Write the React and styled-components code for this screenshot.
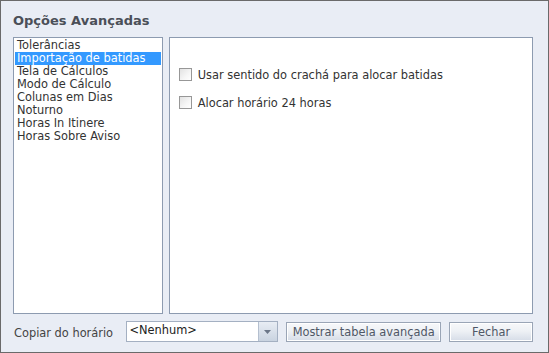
import React from "react";
import styled, { createGlobalStyle } from "styled-components";

const GlobalStyle = createGlobalStyle`
  html, body {
    margin: 0;
    padding: 0;
    background: #ffffff;
  }
`;

const Dialog = styled.div`
  box-sizing: border-box;
  width: 549px;
  height: 353px;
  border: 1px solid #6a6a6a;
  background: #e9edf5;
  padding: 0 15px 0 12px;
  display: flex;
  flex-direction: column;
  font-family: "DejaVu Sans", Verdana, sans-serif;
  font-size: 11.4px;
  color: #333;
`;

const Title = styled.div`
  height: 36px;
  box-sizing: border-box;
  padding-top: 12px;
  font-size: 13px;
  font-weight: bold;
  color: #4b4f58;
  line-height: 16px;
`;

const Panels = styled.div`
  display: flex;
  gap: 6px;
  height: 277px;
`;

const Box = styled.div`
  box-sizing: border-box;
  background: #ffffff;
  border: 1px solid #8d9bb0;
  width: ${(p) => p.$width}px;
  height: 100%;
`;

const List = styled(Box)`
  padding: 1px 1px;
`;

const Item = styled.div`
  height: 13px;
  line-height: 13px;
  padding-left: 2px;
  white-space: nowrap;
  color: ${(p) => (p.$selected ? "#ffffff" : "#333333")};
  background: ${(p) => (p.$selected ? "#3399ff" : "transparent")};
`;

const Options = styled(Box)`
  padding: 30px 0 0 9px;
  display: flex;
  flex-direction: column;
  gap: 15px;
`;

const CheckRow = styled.label`
  display: flex;
  align-items: center;
  gap: 6px;
  height: 13px;
  color: #333;
`;

const CheckBox = styled.span`
  box-sizing: border-box;
  width: 13px;
  height: 13px;
  border: 1px solid #979797;
  background: linear-gradient(135deg, #e2e2e2 0%, #f6f6f6 60%, #ffffff 100%);
`;

const Footer = styled.div`
  display: flex;
  align-items: center;
  height: 23px;
  margin-top: 6px;
`;

const FooterLabel = styled.span`
  width: 112px;
  color: #444;
  padding-left: 1px;
  padding-top: 2px;
`;

const Combo = styled.div`
  box-sizing: border-box;
  display: flex;
  width: 153px;
  height: 21px;
  border: 1px solid #a4b0c2;
  background: #ffffff;
  margin-right: 8px;
`;

const ComboText = styled.span`
  flex: 1;
  padding-left: 3px;
  line-height: 17px;
  color: #222;
`;

const ComboArrow = styled.span`
  width: 18px;
  border-left: 1px solid #b4bfcf;
  background: linear-gradient(#e8edf4, #c9d3e0);
  display: flex;
  align-items: center;
  justify-content: center;
`;

const Button = styled.button`
  box-sizing: border-box;
  width: ${(p) => p.$width}px;
  height: 20px;
  margin-right: ${(p) => p.$gap || 0}px;
  padding: 0;
  border: 1px solid #9aa5b6;
  box-shadow: inset 0 0 0 1px #ffffff;
  background: linear-gradient(#f7f8fa 0%, #eef1f5 45%, #d5dce7 100%);
  font-family: "DejaVu Sans", Verdana, sans-serif;
  font-size: 11.4px;
  color: #4f5766;
  line-height: 16px;
`;

const items = [
  "Tolerâncias",
  "Importação de batidas",
  "Tela de Cálculos",
  "Modo de Cálculo",
  "Colunas em Dias",
  "Noturno",
  "Horas In Itinere",
  "Horas Sobre Aviso",
];

export default function App() {
  return (
    <>
      <GlobalStyle />
      <Dialog>
        <Title>Opções Avançadas</Title>
        <Panels>
          <List $width={150}>
            {items.map((it, i) => (
              <Item key={it} $selected={i === 1}>
                {it}
              </Item>
            ))}
          </List>
          <Options $width={365}>
            <CheckRow>
              <CheckBox />
              Usar sentido do crachá para alocar batidas
            </CheckRow>
            <CheckRow>
              <CheckBox />
              Alocar horário 24 horas
            </CheckRow>
          </Options>
        </Panels>
        <Footer>
          <FooterLabel>Copiar do horário</FooterLabel>
          <Combo>
            <ComboText>&lt;Nenhum&gt;</ComboText>
            <ComboArrow>
              <svg width="7" height="4" viewBox="0 0 7 4">
                <path d="M0 0h7L3.5 4z" fill="#6b7688" />
              </svg>
            </ComboArrow>
          </Combo>
          <Button $width={156} $gap={8}>Mostrar tabela avançada</Button>
          <Button $width={84}>Fechar</Button>
        </Footer>
      </Dialog>
    </>
  );
}
